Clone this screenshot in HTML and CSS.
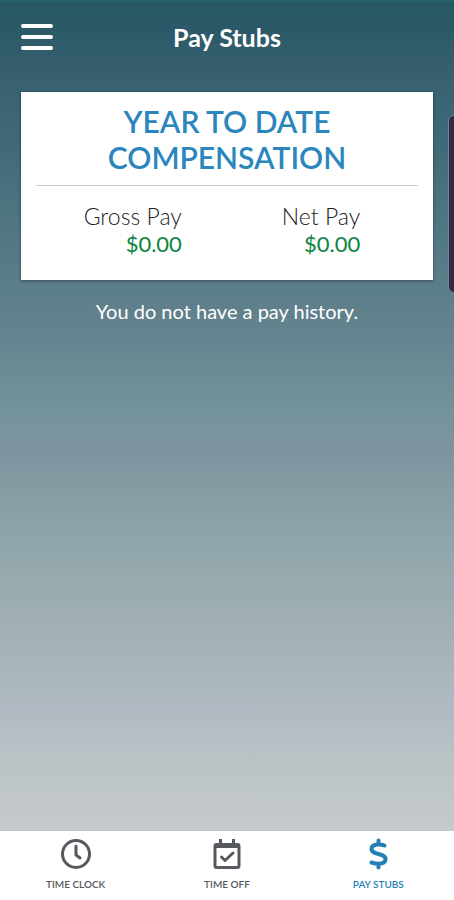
FILE: index.html
```html
<!DOCTYPE html>
<html lang="en">
<head>
<meta charset="utf-8">
<meta name="viewport" content="width=device-width, initial-scale=1">
<title>Pay Stubs</title>
<link rel="stylesheet" href="styles.css">
</head>
<body>
<div class="app">
  <header class="topbar">
    <button class="menu-button" type="button" aria-label="Menu">
      <svg class="menu-icon" viewBox="0 0 32 28" aria-hidden="true"><path d="M2 3h28M2 14h28M2 25h28"/></svg>
    </button>
    <h1 class="title">Pay Stubs</h1>
  </header>
  <main class="content">
    <section class="card">
      <h2 class="card-title">YEAR TO DATE COMPENSATION</h2>
      <dl class="totals">
        <div class="total">
          <dt class="label">Gross Pay</dt>
          <dd class="amount">$0.00</dd>
        </div>
        <div class="total">
          <dt class="label">Net Pay</dt>
          <dd class="amount">$0.00</dd>
        </div>
      </dl>
    </section>
    <p class="empty">You do not have a pay history.</p>
  </main>
  <nav class="tabs">
    <a class="tab" href="#clock">
      <svg class="tab-icon" viewBox="0 0 32 32" aria-hidden="true">
        <circle class="line" cx="16" cy="16" r="13.5"/>
        <path class="line" d="M16 8v9l4 3"/>
      </svg>
      TIME CLOCK
    </a>
    <a class="tab" href="#off">
      <svg class="tab-icon" viewBox="0 0 32 32" aria-hidden="true">
        <path fill="currentColor" fill-rule="evenodd" d="M8 1h3v4h10V1h3v4h2.500a3 3 0 0 1 3 3v20a3 3 0 0 1-3 3h-21a3 3 0 0 1-3-3V8a3 3 0 0 1 3-3H8zM5.500 10v18h21V10z"/>
        <path class="line check" d="M10.500 19l3.500 3.500 8-7.500"/>
      </svg>
      TIME OFF
    </a>
    <a class="tab active" href="#stubs" aria-current="page">
      <svg class="tab-icon" viewBox="0 0 32 32" aria-hidden="true">
        <path class="line dollar" d="M16.500 2.500v4M16.500 25.500v4M22.500 7.500C20.500 6.500 18.500 6.500 16 6.500c-4.500 0-6.500 1.800-6.500 4.500 0 6 14 4 14 10 0 3.200-2.800 4.800-7 4.800-3 0-5-.6-7-1.300"/>
      </svg>
      PAY STUBS
    </a>
  </nav>
  <div class="edge-handle"></div>
</div>
</body>
</html>
```
FILE: styles.css
```css
* {
  box-sizing: border-box;
}

body {
  margin: 0;
  font-family: Lato, "Open Sans", sans-serif;
}

h1, h2, p, dl, dd {
  margin: 0;
}

.app {
  position: relative;
  display: flex;
  flex-direction: column;
  min-height: 100vh;
  overflow: hidden;
  background: linear-gradient(#285866 0, #2b5967 3%, #365f70 8%, #426b7a 17%, #557a85 28%, #64838f 37%, #75939a 46%, #7d949f 50%, #879fa4 56%, #93a8ac 62%, #a2b0b5 70%, #b1bac2 79%, #b8c1c5 83%, #c5cacc 92%);
}

.topbar {
  display: grid;
  grid-template-columns: 32px 1fr 32px;
  align-items: center;
  padding: 20px 21px;
  border-top: 2px solid #2a6370;
}

.menu-button {
  display: flex;
  padding: 0;
  border: 0;
  background: none;
  color: #fff;
}

.menu-icon {
  width: 32px;
  height: 28px;
  fill: none;
  stroke: currentColor;
  stroke-width: 4;
  stroke-linecap: round;
}

.title {
  font-size: 25px;
  line-height: 30px;
  font-weight: 700;
  text-align: center;
  color: #fff;
}

.content {
  flex: 1;
  padding: 20px 21px;
}

.card {
  padding: 11px 15px 20px;
  background: #fff;
  box-shadow: 0 1px 3px rgba(0, 0, 0, 0.4);
}

.card-title {
  padding: 0 48px 10px;
  border-bottom: 1px solid #c8cbcb;
  font-size: 30px;
  line-height: 36px;
  font-weight: 600;
  text-align: center;
  color: #2a86bd;
}

.totals {
  display: flex;
  justify-content: center;
  gap: 100px;
  padding: 17px 10px 3px 0;
  line-height: 27px;
  text-align: right;
}

.label {
  font-size: 23px;
  font-weight: 300;
  color: #222;
}

.amount {
  font-size: 22px;
  color: #0c8440;
}

.empty {
  padding: 18px 0;
  font-size: 20px;
  line-height: 26px;
  text-align: center;
  color: #fff;
}

.tabs {
  display: grid;
  grid-template-columns: repeat(3, 1fr);
  background: #fff;
}

.tab {
  display: flex;
  flex-direction: column;
  align-items: center;
  gap: 8px;
  padding: 7px 0 9px;
  font-size: 10px;
  line-height: 13px;
  font-weight: 600;
  text-decoration: none;
  color: #56595d;
}

.tab-icon {
  width: 32px;
  height: 32px;
}

.line {
  fill: none;
  stroke: currentColor;
  stroke-width: 3;
  stroke-linecap: round;
  stroke-linejoin: round;
}

.dollar {
  stroke-width: 4;
}

.active {
  color: #2380b4;
}

/* System edge panel handle, overlaid on the right side of the screen */
.edge-handle {
  position: absolute;
  top: 115px;
  right: -10px;
  width: 16px;
  height: 178px;
  border: 1px solid #77818f;
  border-radius: 6px;
  background: #302c46;
}
```
